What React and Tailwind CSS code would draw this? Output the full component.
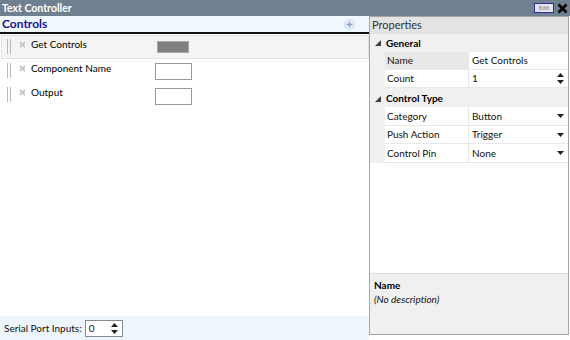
import React from "react";

const Grip = () => (
  <div className="flex gap-[2px] mt-[3px] ml-[5px] h-[15px]">
    <div className="w-px h-full bg-[#b8b8b8]" />
    <div className="w-px h-full bg-[#b8b8b8]" />
  </div>
);

const XIcon = () => (
  <svg width="7" height="7" viewBox="0 0 7 7" className="mt-[5px] ml-[8px] shrink-0">
    <path d="M1 1 L6 6 M6 1 L1 6" stroke="#c8c8c8" strokeWidth="1.8" />
  </svg>
);

const ControlRow = ({ label, selected, children }) => (
  <div
    className={
      "flex items-start h-[24px] ml-px border " +
      (selected ? "bg-[#f4f4f4] border-[#e2e2e2]" : "border-transparent")
    }
  >
    <Grip />
    <XIcon />
    <div className="ml-[5px] w-[124px] leading-[16px] text-black">{label}</div>
    {children}
  </div>
);

const Arrow = () => (
  <svg width="7" height="4" viewBox="0 0 7 4">
    <path d="M0 0 L7 0 L3.5 4 Z" fill="#222" />
  </svg>
);

const Spin = () => (
  <div className="flex flex-col gap-[3px] items-center">
    <svg width="7" height="4" viewBox="0 0 7 4">
      <path d="M0 4 L7 4 L3.5 0 Z" fill="#222" />
    </svg>
    <svg width="7" height="4" viewBox="0 0 7 4">
      <path d="M0 0 L7 0 L3.5 4 Z" fill="#222" />
    </svg>
  </div>
);

const Expander = () => (
  <div className="w-[15px] flex justify-center shrink-0">
    <svg width="6" height="6" viewBox="0 0 6 6">
      <path d="M6 0 L6 6 L0 6 Z" fill="#404040" />
    </svg>
  </div>
);

const Category = ({ label, tall }) => (
  <div className={"flex items-center bg-[#f0f0f0] " + (tall ? "h-[19px] pt-[2px]" : "h-[18px]")}>
    <Expander />
    <div className="ml-px font-bold text-black">{label}</div>
  </div>
);

const Prop = ({ name, value, selected, right, tall }) => (
  <div className={"flex " + (tall ? "h-[19px]" : "h-[18px]")}>
    <div className="w-[15px] bg-[#f0f0f0] shrink-0" />
    <div
      className={
        "w-[84px] shrink-0 flex items-center pl-[2px] border-b border-[#e8e8e8] border-r " +
        (selected ? "bg-[#e8e8e8]" : "bg-white")
      }
    >
      {name}
    </div>
    <div className="flex-1 flex items-center justify-between pl-[3px] pr-[4px] border-b border-[#e8e8e8] bg-white">
      <span>{value}</span>
      {right}
    </div>
  </div>
);

export default function App() {
  return (
    <div className="w-[570px] h-[340px] bg-white flex flex-col text-[10px] text-[#111] font-['Lato',sans-serif] overflow-hidden">
      {/* title bar */}
      <div className="h-[16px] bg-[#708090] flex items-center justify-between pl-[2px] pr-[2px] shrink-0">
        <span className="text-white font-bold text-[10.5px] leading-none">Text Controller</span>
        <div className="flex items-center gap-[3px]">
          <div className="w-[20px] h-[10px] border border-[#2b2b9a] bg-[#e4e4ea] text-[6px] leading-[8px] text-[#777] text-center">
            Edit
          </div>
          <svg width="11" height="11" viewBox="0 0 11 11">
            <path d="M1.5 1.5 L9.5 9.5 M9.5 1.5 L1.5 9.5" stroke="#000" strokeWidth="2.6" />
          </svg>
        </div>
      </div>

      <div className="flex flex-1 min-h-0">
        {/* left */}
        <div className="w-[369px] flex flex-col shrink-0">
          <div className="h-[18px] bg-[#f0f8ff] border-b-2 border-[#111] flex items-center justify-between pl-[2px] pr-[14px]">
            <span className="font-bold text-[12px] leading-none text-[#14148a]">Controls</span>
            <svg width="11" height="11" viewBox="0 0 11 11">
              <circle cx="5.5" cy="5.5" r="5" fill="#eef3fb" stroke="#c9d6ea" />
              <path d="M5.5 2.5 V8.5 M2.5 5.5 H8.5" stroke="#7f9fd4" strokeWidth="1.6" />
            </svg>
          </div>
          <div className="flex-1 flex flex-col pt-[1px]">
            <ControlRow label="Get Controls" selected>
              <div className="mt-[5px] ml-[2px] w-[32px] h-[12px] bg-[#808080] border border-[#a8a8a8]" />
            </ControlRow>
            <ControlRow label="Component Name">
              <div className="mt-[3px] w-[37px] h-[17px] bg-white border border-[#999]" />
            </ControlRow>
            <ControlRow label="Output">
              <div className="mt-[4px] w-[37px] h-[17px] bg-white border border-[#999]" />
            </ControlRow>
          </div>
          <div className="h-[24px] bg-[#edf5fd] flex items-center pl-[4px] shrink-0">
            <span>Serial Port Inputs:</span>
            <div className="ml-[3px] w-[38px] h-[17px] bg-white border border-[#8a8a8a] flex items-center justify-between pl-[3px] pr-[4px]">
              <span className="leading-none">0</span>
              <Spin />
            </div>
          </div>
        </div>

        {/* right */}
        <div className="w-[200px] flex flex-col shrink-0 mb-[5px]">
          <div className="flex-1 flex flex-col border border-[#a6a6a6] bg-white">
            <div className="h-[17px] bg-[#e3e3e3] flex items-center pl-[2px] text-[11px] text-[#333] shrink-0">
              Properties
            </div>
            <div className="flex-1 flex flex-col">
              <Category label="General" />
              <Prop name="Name" value="Get Controls" selected />
              <Prop name="Count" value="1" right={<Spin />} />
              <Category label="Control Type" tall />
              <Prop name="Category" value="Button" right={<Arrow />} tall />
              <Prop name="Push Action" value="Trigger" right={<Arrow />} />
              <Prop name="Control Pin" value="None" right={<Arrow />} tall />
            </div>
            <div className="h-[61px] bg-[#f0f0f0] border-t border-[#dcdcdc] pl-[4px] pt-[4px] shrink-0">
              <div className="font-bold text-black leading-[14px]">Name</div>
              <div className="italic leading-[14px]">(No description)</div>
            </div>
          </div>
        </div>
      </div>
    </div>
  );
}
